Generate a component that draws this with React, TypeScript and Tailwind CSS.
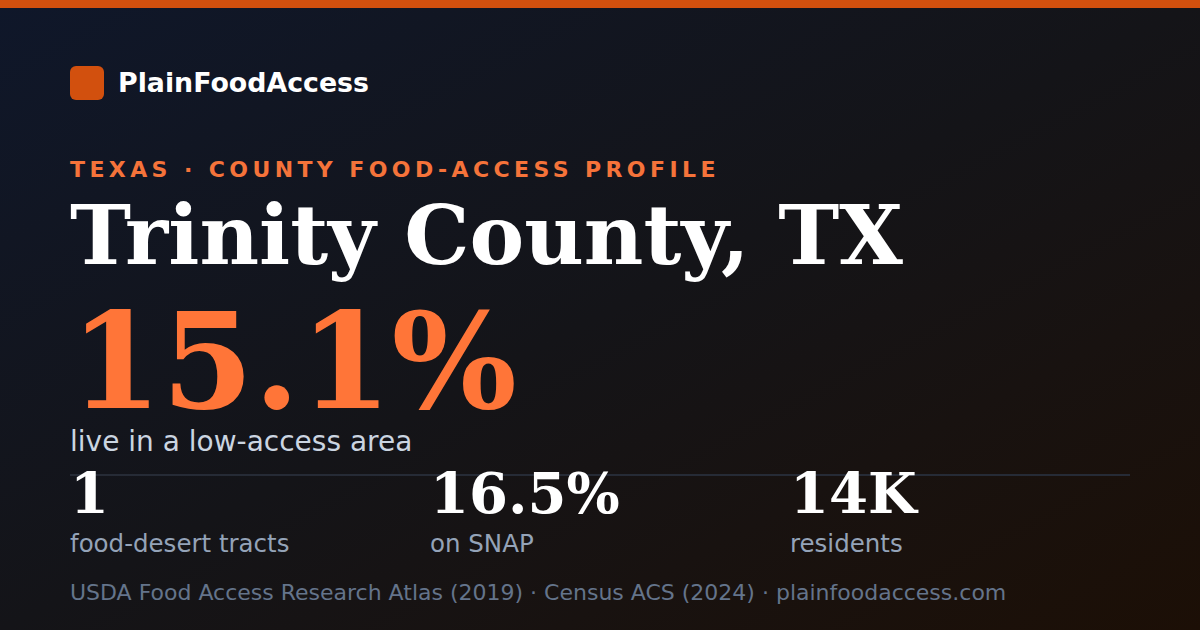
export default function App() {
  const stats = [
    { value: '1', label: 'food-desert tracts' },
    { value: '16.5%', label: 'on SNAP' },
    { value: '14K', label: 'residents' },
  ]

  return (
    <div className="relative h-[630px] w-[1200px] overflow-hidden bg-gradient-to-br from-[#0f172a] via-[#141418] to-[#1c0f06] font-['DejaVu_Sans',sans-serif]">
      <div className="h-2 w-full bg-[#d2500e]" />
      <div className="flex flex-col px-[70px] pt-[58px]">
        <div className="flex h-[34px] items-center gap-[14px]">
          <div className="h-[34px] w-[34px] rounded-[6px] bg-[#d2500e]" />
          <span className="text-[26.8px] leading-none font-bold text-white">PlainFoodAccess</span>
        </div>

        <p className="mt-[59px] text-[22px] leading-none font-bold tracking-[0.2em] text-[#f5733a] uppercase">
          Texas · County food-access profile
        </p>
        <h1 className="mt-[13px] font-['DejaVu_Serif',serif] text-[82px] leading-none font-bold text-white">
          Trinity County, TX
        </h1>

        <div className="mt-[30px] font-['DejaVu_Serif',serif] text-[132px] leading-[112px] font-bold text-[#ff7538]">
          15.1%
        </div>
        <p className="mt-[10px] text-[28px] leading-none text-[#cbd5e1]">live in a low-access area</p>

        <div className="mt-[18px] grid grid-cols-[360px_360px_1fr] border-t-2 border-[#262b36]">
          {stats.map((s) => (
            <div key={s.label} className="flex flex-col">
              <span className="-mt-[11px] font-['DejaVu_Serif',serif] text-[56px] leading-none font-bold text-white">
                {s.value}
              </span>
              <span className="mt-[11px] text-[24.5px] leading-none text-[#94a3b8]">{s.label}</span>
            </div>
          ))}
        </div>

        <p className="mt-[25px] text-[22px] leading-none text-[#64748b]">
          USDA Food Access Research Atlas (2019) · Census ACS (2024) · plainfoodaccess.com
        </p>
      </div>
    </div>
  )
}
